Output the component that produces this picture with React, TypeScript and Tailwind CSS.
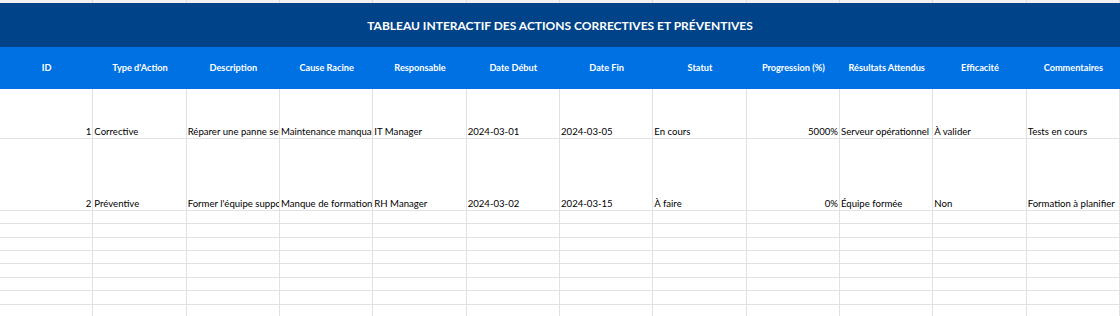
import React from "react";

const headers = [
  "ID",
  "Type d'Action",
  "Description",
  "Cause Racine",
  "Responsable",
  "Date Début",
  "Date Fin",
  "Statut",
  "Progression (%)",
  "Résultats Attendus",
  "Efficacité",
  "Commentaires",
];

type Cell = { v: string; right?: boolean };

const rows: { h: string; cells: Cell[] }[] = [
  {
    h: "h-[50px]",
    cells: [
      { v: "1", right: true },
      { v: "Corrective" },
      { v: "Réparer une panne serveur" },
      { v: "Maintenance manquante" },
      { v: "IT Manager" },
      { v: "2024-03-01" },
      { v: "2024-03-05" },
      { v: "En cours" },
      { v: "5000%", right: true },
      { v: "Serveur opérationnel" },
      { v: "À valider" },
      { v: "Tests en cours" },
    ],
  },
  {
    h: "h-[72px]",
    cells: [
      { v: "2", right: true },
      { v: "Préventive" },
      { v: "Former l'équipe support" },
      { v: "Manque de formation" },
      { v: "RH Manager" },
      { v: "2024-03-02" },
      { v: "2024-03-15" },
      { v: "À faire" },
      { v: "0%", right: true },
      { v: "Équipe formée" },
      { v: "Non" },
      { v: "Formation à planifier" },
    ],
  },
];

const emptyHeights = [
  "h-[13px]",
  "h-[14px]",
  "h-[13px]",
  "h-[13px]",
  "h-[14px]",
  "h-[13px]",
  "h-[14px]",
  "h-[13px]",
];

const cols = Array.from({ length: 12 }, (_, i) => i);

export default function App() {
  return (
    <div
      className="w-[1120px] h-[316px] overflow-hidden bg-white text-black"
      style={{ fontFamily: "Lato, 'Noto Sans', sans-serif" }}
    >
      {/* partial row at top */}
      <div className="grid grid-cols-12 h-[3px] bg-[#f2f2f2]">
        {cols.map((i) => (
          <div key={i} className="border-r border-[#dcdcdc]" />
        ))}
      </div>
      {/* title */}
      <div className="h-[44px] bg-[#004388] flex items-center justify-center">
        <span className="text-white font-bold text-[12px] pt-[1px]">
          TABLEAU INTERACTIF DES ACTIONS CORRECTIVES ET PRÉVENTIVES
        </span>
      </div>
      {/* header */}
      <div className="grid grid-cols-12 h-[42px] bg-[#0071e3]">
        {headers.map((h) => (
          <div
            key={h}
            className="flex items-center justify-center text-white font-bold text-[9.2px] whitespace-nowrap"
          >
            {h}
          </div>
        ))}
      </div>
      {/* data rows */}
      {rows.map((r, ri) => (
        <div key={ri} className={`grid grid-cols-12 ${r.h}`}>
          {r.cells.map((c, ci) => (
            <div
              key={ci}
              className={`border-r border-b border-[#e1e1e1] flex items-end overflow-hidden whitespace-nowrap text-[9.6px] leading-none pb-[1px] ${
                c.right ? "justify-end pr-[1px]" : "justify-start pl-[1px]"
              }`}
            >
              {c.v}
            </div>
          ))}
        </div>
      ))}
      {emptyHeights.map((h, ri) => (
        <div key={ri} className={`grid grid-cols-12 ${h}`}>
          {cols.map((i) => (
            <div key={i} className="border-r border-b border-[#e1e1e1]" />
          ))}
        </div>
      ))}
    </div>
  );
}
